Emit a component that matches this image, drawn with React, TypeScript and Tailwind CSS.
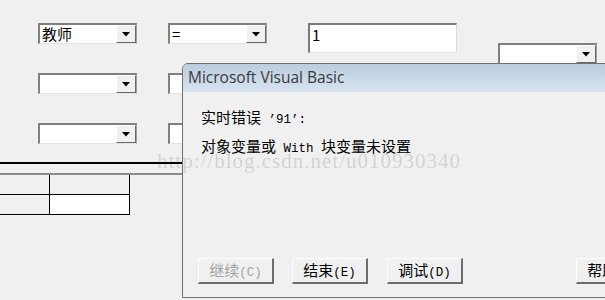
import React from 'react';

const cjk = '"Noto Sans CJK SC", "Liberation Sans", sans-serif';

function Arrow() {
  return (
    <svg width="8" height="5" viewBox="0 0 8 5">
      <polygon points="0,0 8,0 4,4.5" fill="#000" />
    </svg>
  );
}

function Combo({ value }: { value?: string }) {
  return (
    <div className="flex h-[21px] w-[99px] border-t-2 border-l-2 border-t-[#808080] border-l-[#808080] border-r border-b border-r-[#a0a0a0] border-b-[#e3e3e3] bg-white">
      <div className="flex-1 overflow-hidden pl-[2px] text-[15px] leading-[18px] text-black" style={{ fontFamily: cjk }}>
        {value}
      </div>
      <div className="flex w-[20px] items-center justify-center border-l border-t border-l-white border-t-white border-r border-b border-r-[#696969] border-b-[#696969] bg-[#f0f0f0]">
        <Arrow />
      </div>
    </div>
  );
}

function Half({ children }: { children: React.ReactNode }) {
  return <span className="text-[12.5px]" style={{ fontFamily: '"Liberation Mono", monospace' }}>{children}</span>;
}

function WinButton({ children, disabled }: { children: React.ReactNode; disabled?: boolean }) {
  return (
    <div
      className={`flex h-[26px] w-[76px] shrink-0 items-center justify-center border-t border-l border-t-white border-l-white border-r-2 border-b-2 border-r-[#6d6d6d] border-b-[#6d6d6d] bg-[#f0f0f0] text-[15px] ${disabled ? 'text-[#a3a3a3]' : 'text-black'}`}
      style={{ fontFamily: cjk }}
    >
      <span className="whitespace-nowrap">{children}</span>
    </div>
  );
}

export default function App() {
  return (
    <div className="relative h-[300px] w-[605px] overflow-hidden bg-[#f0f0f0]">
      {/* form controls */}
      <div className="flex items-start pt-[23px] pl-[38px]">
        <div className="flex flex-col gap-[29px]">
          <Combo value="教师" />
          <Combo />
          <Combo />
        </div>
        <div className="ml-[31px] flex flex-col gap-[29px]">
          <Combo value="=" />
          <Combo />
          <Combo />
        </div>
        <div className="ml-[41px] h-[30px] w-[149px] border-t-2 border-l-2 border-t-[#7a7a7a] border-l-[#7a7a7a] border-r border-b border-r-[#dcdcdc] border-b-[#e6e6e6] bg-white pl-[2px] text-[15px] leading-[19px]" style={{ fontFamily: cjk }}>
          1
        </div>
        <div className="ml-[41px] mt-[20px]">
          <Combo />
        </div>
      </div>

      {/* grid */}
      <div className="mt-[18px] h-[2px] w-[190px] bg-black" />
      <div className="mt-[9px] h-[2px] w-[190px] bg-[#8a8a8a]" />
      <div className="grid w-[130px] grid-cols-[49px_81px]">
        <div className="h-[20px] border-b border-black" />
        <div className="h-[20px] border-x border-b border-black" />
        <div className="h-[20px] border-b border-black" />
        <div className="h-[20px] border-x border-b border-black bg-white" />
      </div>

      {/* dialog */}
      <div className="absolute left-[182px] top-[63px] flex h-[235px] w-[440px] flex-col overflow-hidden rounded-tl-[6px] border border-[#707070] bg-[#f0f0f0]">
        <div className="flex h-[28px] items-center bg-gradient-to-b from-[#bccde0] to-[#d7e3f0] pl-[5px] text-[15.5px] text-[#3a3a3a]" style={{ fontFamily: '"Open Sans", "Noto Sans", sans-serif' }}>
          Microsoft Visual Basic
        </div>
        <div className="flex flex-1 flex-col pl-[18px] text-[15px] text-black" style={{ fontFamily: cjk }}>
          <div className="mt-[15px] leading-[20px]">
            实时错误<Half> ’91’:</Half>
          </div>
          <div className="mt-[6px] leading-[20px]">
            对象变量或<Half> With </Half>块变量未设置
          </div>
        </div>
        <div className="flex items-start pl-[15px] pb-[13px]">
          <WinButton disabled>
            继续<Half>(C)</Half>
          </WinButton>
          <div className="ml-[18px]">
            <WinButton>
              结束<Half>(E)</Half>
            </WinButton>
          </div>
          <div className="ml-[19px]">
            <WinButton>
              调试<Half>(D)</Half>
            </WinButton>
          </div>
          <div className="ml-[113px]">
            <WinButton>
              帮助<Half>(H)</Half>
            </WinButton>
          </div>
        </div>
      </div>

      {/* watermark */}
      <div
        className="pointer-events-none absolute left-[157px] top-[147px] whitespace-nowrap text-[21px] leading-[28px] tracking-[1px] text-black/15"
        style={{ fontFamily: '"Liberation Serif", serif' }}
      >
        http://blog.csdn.net/u010930340
      </div>
    </div>
  );
}
